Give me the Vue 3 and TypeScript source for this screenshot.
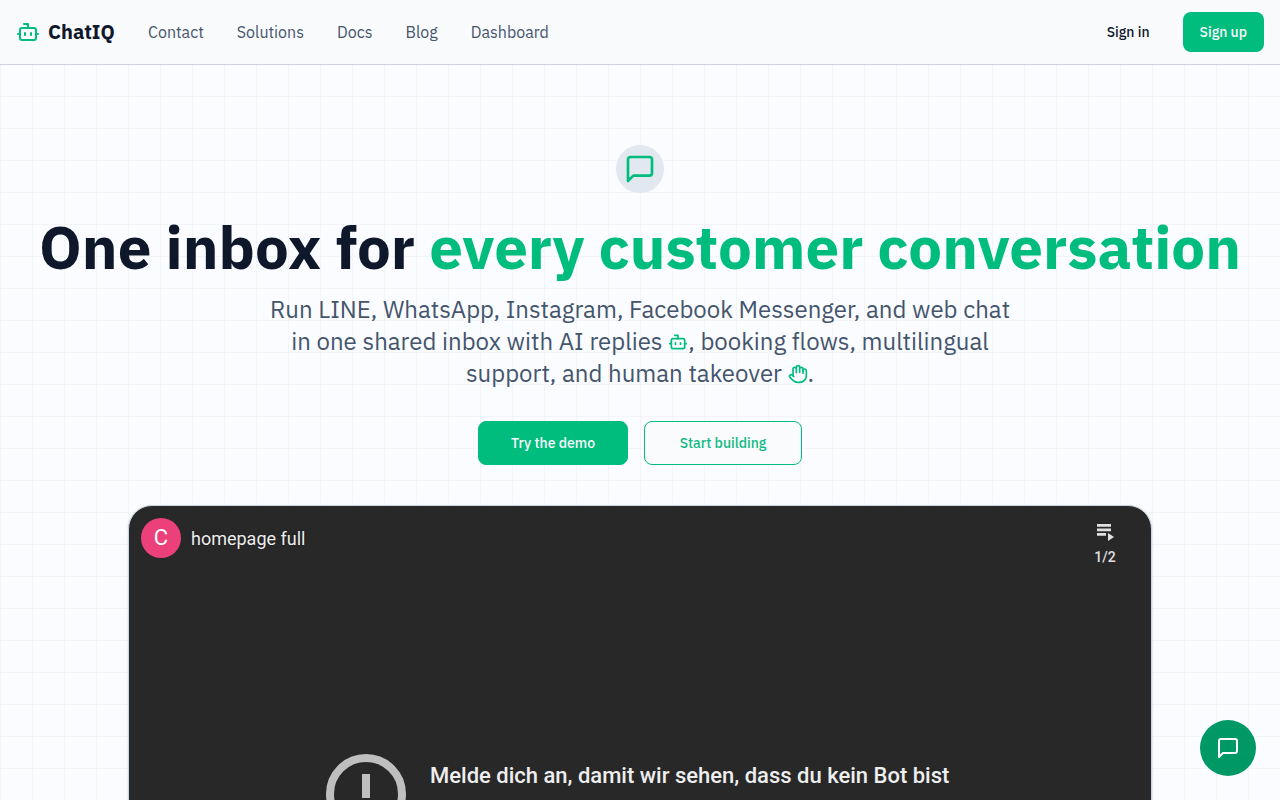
<script setup lang="ts">
interface NavLink {
  label: string
  href: string
}

const links: NavLink[] = [
  { label: 'Contact', href: '#contact' },
  { label: 'Solutions', href: '#solutions' },
  { label: 'Docs', href: '#docs' },
  { label: 'Blog', href: '#blog' },
  { label: 'Dashboard', href: '#dashboard' },
]
</script>

<template>
  <div class="page">
    <header class="header">
      <a class="brand" href="#home">
        <svg class="stroke brand-icon" viewBox="0 0 24 24" aria-hidden="true">
          <path d="M12 8V4H8" />
          <rect width="16" height="12" x="4" y="8" rx="2" />
          <path d="M2 14h2M20 14h2M15 13v2M9 13v2" />
        </svg>
        <span>ChatIQ</span>
      </a>
      <nav class="nav" aria-label="Main">
        <a v-for="link in links" :key="link.label" :href="link.href">{{ link.label }}</a>
      </nav>
      <div class="account">
        <a class="sign-in" href="#signin">Sign in</a>
        <a class="sign-up" href="#signup">Sign up</a>
      </div>
    </header>

    <main class="hero">
      <div class="badge">
        <svg class="stroke" viewBox="0 0 24 24" aria-hidden="true">
          <path d="M21 15a2 2 0 0 1-2 2H7l-4 4V5a2 2 0 0 1 2-2h14a2 2 0 0 1 2 2z" />
        </svg>
      </div>
      <h1>One inbox for <span>every customer conversation</span></h1>
      <p class="lead">
        Run LINE, WhatsApp, Instagram, Facebook Messenger, and web chat in one shared inbox with AI replies
        <svg class="stroke inline-icon" viewBox="0 0 24 24" aria-hidden="true">
          <path d="M12 8V4H8" />
          <rect width="16" height="12" x="4" y="8" rx="2" />
          <path d="M2 14h2M20 14h2M15 13v2M9 13v2" />
        </svg>, booking flows, multilingual support, and human takeover
        <svg class="stroke inline-icon" viewBox="0 0 24 24" aria-hidden="true">
          <path d="M18 11V6a2 2 0 0 0-4 0M14 10V4a2 2 0 0 0-4 0v2M10 10.5V6a2 2 0 0 0-4 0v8" />
          <path d="M18 8a2 2 0 1 1 4 0v6a8 8 0 0 1-8 8h-2c-2.8 0-4.5-.86-5.99-2.34l-3.6-3.6a2 2 0 0 1 2.83-2.82L7 15" />
        </svg>.
      </p>
      <div class="actions">
        <a class="action solid" href="#demo">Try the demo</a>
        <a class="action outline" href="#build">Start building</a>
      </div>

      <section class="video" aria-label="homepage full">
        <div class="video-bar">
          <span class="avatar">C</span>
          <a class="video-title" href="#video">homepage full</a>
          <button class="playlist" type="button" aria-label="Playlist 1/2">
            <svg viewBox="0 0 24 24" aria-hidden="true">
              <path d="M4 4h14v2.7H4zM4 8.5h14v2.7H4zM4 13h9v2.7H4zM15 13v8l6-4z" />
            </svg>
            <span>1/2</span>
          </button>
        </div>
        <div class="notice">
          <svg class="alert" viewBox="0 0 80 80" aria-hidden="true">
            <circle cx="40" cy="40" r="36" />
            <path d="M36 20h8v24h-8zM36 52h8v8h-8z" />
          </svg>
          <p>Melde dich an, damit wir sehen, dass du kein Bot bist</p>
        </div>
      </section>
    </main>

    <button class="chat" type="button" aria-label="Open chat">
      <svg class="stroke" viewBox="0 0 24 24" aria-hidden="true">
        <path d="M21 15a2 2 0 0 1-2 2H7l-4 4V5a2 2 0 0 1 2-2h14a2 2 0 0 1 2 2z" />
      </svg>
    </button>
  </div>
</template>

<style>
body {
  margin: 0;
}
</style>

<style scoped>
.page {
  height: 100vh;
  overflow: hidden;
  color: #0f172b;
  font-family: "IBM Plex Sans", "Noto Sans", sans-serif;
  background-color: #fafcff;
  background-image:
    linear-gradient(to right, #f2f4f8 1px, transparent 1px),
    linear-gradient(to bottom, #f2f4f8 1px, transparent 1px);
  background-size: 32px 32px;
}

a {
  color: inherit;
  text-decoration: none;
}

button {
  border: 0;
  padding: 0;
  cursor: pointer;
}

svg {
  display: block;
}

.stroke {
  fill: none;
  stroke: currentColor;
  stroke-width: 2;
  stroke-linecap: round;
  stroke-linejoin: round;
}

.header {
  display: flex;
  align-items: center;
  gap: 32px;
  height: 64px;
  padding: 0 16px;
  border-bottom: 1px solid #cdd2dc;
  background: #f9fafc;
}

.brand {
  display: flex;
  align-items: center;
  gap: 8px;
  min-width: 100px;
  font-size: 20px;
  line-height: 28px;
  font-weight: 700;
}

.brand-icon {
  width: 24px;
  height: 24px;
  color: #00bc7d;
}

.nav {
  display: flex;
  gap: 33px;
  font-size: 16px;
  line-height: 24px;
  color: #45556c;
}

.account {
  display: flex;
  gap: 16px;
  margin-left: auto;
  font-size: 14px;
  line-height: 20px;
  font-weight: 500;
}

.sign-in,
.sign-up {
  padding: 10px 17px;
  border-radius: 8px;
}

.sign-up {
  background: #00bc7d;
  color: #f8fafc;
}

.hero {
  display: flex;
  flex-direction: column;
  align-items: center;
  padding: 80px 16px 0;
  text-align: center;
}

.badge {
  padding: 8px;
  border-radius: 50%;
  background: #e2e8f0;
  color: #00bc7d;
}

.badge svg {
  width: 32px;
  height: 32px;
}

h1 {
  margin: 24px 0 0;
  font-size: 60px;
  line-height: 60px;
  font-weight: 700;
}

h1 span {
  color: #00bc7d;
}

.lead {
  max-width: 760px;
  margin: 16px 0 0;
  font-size: 24px;
  line-height: 32px;
  color: #45556c;
}

.inline-icon {
  display: inline-block;
  width: 20px;
  height: 20px;
  vertical-align: -2px;
  color: #00bc7d;
}

.actions {
  display: flex;
  gap: 16px;
  margin-top: 32px;
  font-size: 14px;
  line-height: 20px;
  font-weight: 500;
}

.action {
  padding: 11px 32px;
  border: 1px solid #00bc7d;
  border-radius: 8px;
}

.solid {
  background: #00bc7d;
  color: #f8fafc;
}

.outline {
  min-width: 92px;
  background: #fafbfd;
  color: #10b981;
}

.video {
  box-sizing: border-box;
  width: 100%;
  max-width: 1024px;
  aspect-ratio: 16 / 9;
  margin-top: 40px;
  border: 1px solid #cad5e2;
  border-radius: 24px;
  overflow: hidden;
  background: #282828;
  color: #eeeeee;
  font-family: Roboto, sans-serif;
  box-shadow: 0 1px 3px rgba(15, 23, 43, 0.12);
}

.video-bar {
  display: flex;
  align-items: center;
  gap: 10px;
  height: 64px;
  padding: 0 34px 0 12px;
}

.avatar {
  width: 40px;
  border-radius: 50%;
  background: #ec407a;
  color: #ffffff;
  font-size: 22px;
  line-height: 40px;
}

.video-title {
  padding-top: 2px;
  font-size: 18px;
  line-height: 24px;
  text-shadow: 0 0 2px rgba(0, 0, 0, 0.5);
}

.playlist {
  display: flex;
  flex-direction: column;
  align-items: center;
  gap: 3px;
  margin-left: auto;
  padding-top: 11px;
  background: none;
  color: #e0e0e0;
  font: 500 14px/20px Roboto, sans-serif;
}

.playlist svg {
  width: 24px;
  height: 24px;
  fill: currentColor;
}

.notice {
  display: flex;
  gap: 24px;
  padding: 184px 197px 0;
  font-size: 22px;
  line-height: 28px;
  font-weight: 500;
  text-align: left;
}

.notice p {
  margin: 8px 0 0;
}

.alert {
  width: 80px;
  height: 80px;
  flex: none;
  fill: #bfbfbf;
}

.alert circle {
  fill: none;
  stroke: #bfbfbf;
  stroke-width: 8;
}

.chat {
  position: fixed;
  right: 24px;
  bottom: 24px;
  display: grid;
  place-items: center;
  width: 56px;
  height: 56px;
  border-radius: 50%;
  background: #009966;
  color: #ffffff;
}

.chat svg {
  width: 24px;
  height: 24px;
}
</style>
